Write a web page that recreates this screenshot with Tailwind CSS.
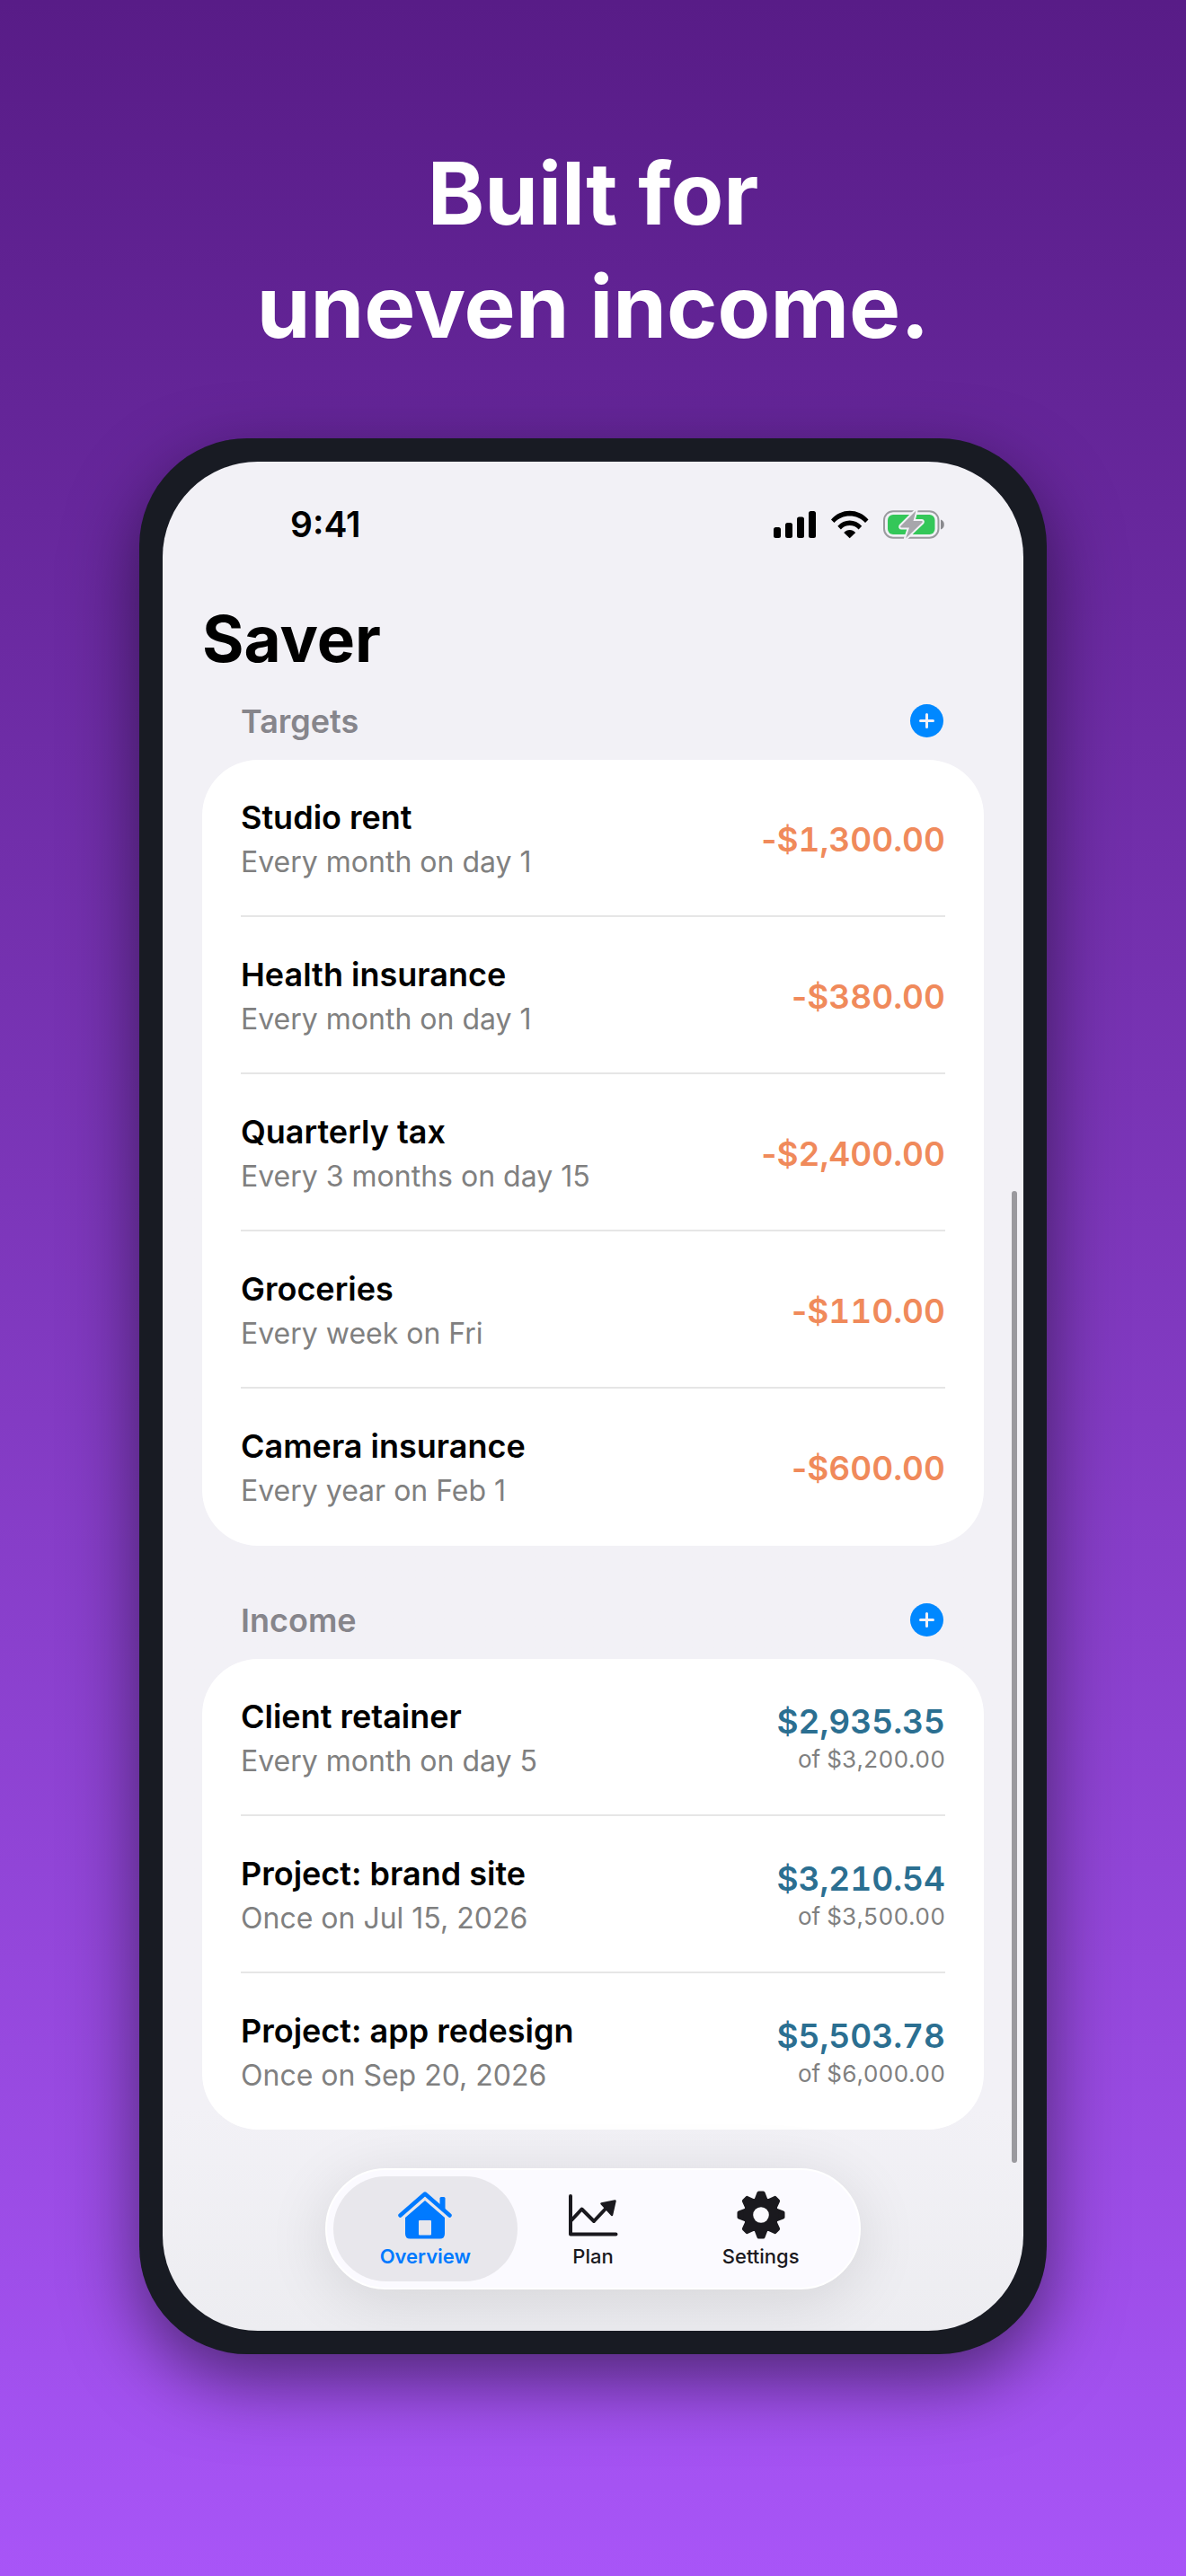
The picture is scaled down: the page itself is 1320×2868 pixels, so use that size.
<!DOCTYPE html>
<html lang="en">
<head>
<meta charset="utf-8">
<meta name="viewport" content="width=device-width, initial-scale=1">
<title>Saver</title>
<script src="https://cdn.jsdelivr.net/npm/@tailwindcss/browser@4"></script>
</head>
<body class="min-h-screen bg-linear-to-b from-[#581c87] to-[#a855f7] font-['Inter',sans-serif] text-black antialiased">
<main class="flex flex-col items-center px-4 pt-[152px] pb-[247px]">
  <h2 class="text-center text-[96px] leading-[126px] font-bold text-white">Built for<br>uneven income.</h2>

  <div class="mt-[84px] w-full max-w-[1010px] rounded-[120px] bg-[#181b23] p-[26px] shadow-[0_30px_80px_rgba(0,0,0,0.5)]">
    <div class="relative overflow-hidden rounded-[106px] bg-linear-to-b from-[#f2f1f6] from-88% to-[#ededf1] px-[44px]">

      <!-- Status bar -->
      <div class="flex h-[140px] items-center justify-between pr-[44px] pl-[98px]">
        <span class="text-[39px] leading-[48px] font-semibold">9:41</span>
        <svg class="h-[32px] w-[190px]" viewBox="0 0 190 32" aria-label="Signal, Wi-Fi, battery charging" role="img">
          <rect x="0" y="19" width="8" height="12" rx="2.5"/>
          <rect x="13" y="14" width="8" height="17" rx="2.5"/>
          <rect x="26" y="7.500" width="8" height="23.500" rx="2.500"/>
          <rect x="39" y="1" width="8" height="30" rx="2.500"/>
          <path d="M64 10.500C69.500 4 77 .700 84.700 .700S100 4 105.500 10.500L102 14C97.500 9 91.500 6.400 84.700 6.400S72 9 67.500 14Z"/>
          <path d="M71.300 17.800C75 13.500 79.700 11.500 84.700 11.500S94.500 13.500 98.200 17.800L94.600 21.400C92 18.500 88.600 17 84.700 17S77.500 18.500 74.900 21.400Z"/>
          <path d="M78.200 24.900C80 22.900 82.200 21.900 84.700 21.900S89.400 22.900 91.200 24.900L84.700 31.300Z"/>
          <rect x="123" y="1.200" width="60.500" height="29.500" rx="10" fill="none" stroke="#9b9b9f" stroke-width="2"/>
          <rect x="127" y="5" width="52.500" height="22" rx="6" fill="#34c759"/>
          <path d="M186 10.500C189 11.500 189.800 13.500 189.800 16S189 20.500 186 21.500Z" fill="#8a8a8e"/>
          <path d="M158.500 0.500L141.500 17.500Q140.500 19.500 142.500 19.500H151L147 31.500L165.500 13.800Q166.500 12 164.500 12H155.500Z" fill="#a7a6ab" stroke="#f2f1f6" stroke-width="4" stroke-linejoin="round" paint-order="stroke"/>
        </svg>
      </div>

      <h1 class="mt-[17px] text-[71px] leading-[80px] font-bold">Saver</h1>

      <section class="mt-[8px]">
        <div class="flex h-[87px] items-center justify-between pr-[45px] pl-[43px]">
          <h2 class="text-[36px] leading-[50px] font-semibold text-[#86858b]">Targets</h2>
          <button type="button" aria-label="Add target" class="size-[37px] rounded-full bg-[#0088ff]">
            <svg class="size-[37px]" viewBox="0 0 37 37" fill="none" stroke="#f2f1f6" stroke-width="3" stroke-linecap="round"><path d="M18.500 11.500V25.500M11.500 18.500H25.500"/></svg>
          </button>
        </div>
        <ul class="rounded-[62px] bg-white px-[43px]">
          <li class="flex items-center justify-between border-b-2 border-[#e6e6e6] pt-[39px] pb-[34px]">
            <div><h3 class="text-[36px] leading-[50px] font-semibold">Studio rent</h3><p class="text-[32px] leading-[50px] text-[#808080]">Every month on day 1</p></div>
            <p class="text-[37px] leading-[42px] font-semibold text-[#f08a5b]">-<span class="tabular-nums">$1,300.00</span></p>
          </li>
          <li class="flex items-center justify-between border-b-2 border-[#e6e6e6] pt-[39px] pb-[34px]">
            <div><h3 class="text-[36px] leading-[50px] font-semibold">Health insurance</h3><p class="text-[32px] leading-[50px] text-[#808080]">Every month on day 1</p></div>
            <p class="text-[37px] leading-[42px] font-semibold text-[#f08a5b]">-<span class="tabular-nums">$380.00</span></p>
          </li>
          <li class="flex items-center justify-between border-b-2 border-[#e6e6e6] pt-[39px] pb-[34px]">
            <div><h3 class="text-[36px] leading-[50px] font-semibold">Quarterly tax</h3><p class="text-[32px] leading-[50px] text-[#808080]">Every 3 months on day 15</p></div>
            <p class="text-[37px] leading-[42px] font-semibold text-[#f08a5b]">-<span class="tabular-nums">$2,400.00</span></p>
          </li>
          <li class="flex items-center justify-between border-b-2 border-[#e6e6e6] pt-[39px] pb-[34px]">
            <div><h3 class="text-[36px] leading-[50px] font-semibold">Groceries</h3><p class="text-[32px] leading-[50px] text-[#808080]">Every week on Fri</p></div>
            <p class="text-[37px] leading-[42px] font-semibold text-[#f08a5b]">-<span class="tabular-nums">$110.00</span></p>
          </li>
          <li class="flex items-center justify-between pt-[39px] pb-[36px]">
            <div><h3 class="text-[36px] leading-[50px] font-semibold">Camera insurance</h3><p class="text-[32px] leading-[50px] text-[#808080]">Every year on Feb 1</p></div>
            <p class="text-[37px] leading-[42px] font-semibold text-[#f08a5b]">-<span class="tabular-nums">$600.00</span></p>
          </li>
        </ul>
      </section>

      <section class="mt-[39px]">
        <div class="flex h-[87px] items-center justify-between pr-[45px] pl-[43px]">
          <h2 class="text-[36px] leading-[50px] font-semibold text-[#86858b]">Income</h2>
          <button type="button" aria-label="Add income" class="size-[37px] rounded-full bg-[#0088ff]">
            <svg class="size-[37px]" viewBox="0 0 37 37" fill="none" stroke="#f2f1f6" stroke-width="3" stroke-linecap="round"><path d="M18.500 11.500V25.500M11.500 18.500H25.500"/></svg>
          </button>
        </div>
        <ul class="rounded-[62px] bg-white px-[43px]">
          <li class="flex items-center justify-between border-b-2 border-[#e6e6e6] pt-[39px] pb-[34px]">
            <div><h3 class="text-[36px] leading-[50px] font-semibold">Client retainer</h3><p class="text-[32px] leading-[50px] text-[#808080]">Every month on day 5</p></div>
            <div class="pt-1 text-right tabular-nums"><p class="text-[37px] leading-[42px] font-semibold text-[#2b6f91]">$2,935.35</p><p class="text-[26px] leading-[42px] text-[#808080]">of $3,200.00</p></div>
          </li>
          <li class="flex items-center justify-between border-b-2 border-[#e6e6e6] pt-[39px] pb-[34px]">
            <div><h3 class="text-[36px] leading-[50px] font-semibold">Project: brand site</h3><p class="text-[32px] leading-[50px] text-[#808080]">Once on Jul 15, 2026</p></div>
            <div class="pt-1 text-right tabular-nums"><p class="text-[37px] leading-[42px] font-semibold text-[#2b6f91]">$3,210.54</p><p class="text-[26px] leading-[42px] text-[#808080]">of $3,500.00</p></div>
          </li>
          <li class="flex items-center justify-between pt-[39px] pb-[35px]">
            <div><h3 class="text-[36px] leading-[50px] font-semibold">Project: app redesign</h3><p class="text-[32px] leading-[50px] text-[#808080]">Once on Sep 20, 2026</p></div>
            <div class="pt-1 text-right tabular-nums"><p class="text-[37px] leading-[42px] font-semibold text-[#2b6f91]">$5,503.78</p><p class="text-[26px] leading-[42px] text-[#808080]">of $6,000.00</p></div>
          </li>
        </ul>
      </section>

      <!-- Floating tab bar -->
      <nav class="mx-auto mt-[43px] mb-[46px] grid max-w-[596px] grid-cols-3 rounded-full border-2 border-white bg-[#fbfaff] px-[16px] py-[7px] shadow-[0_12px_70px_rgba(0,0,0,0.11)]">
        <a href="#overview" aria-current="page" class="relative flex h-[117px] flex-col items-center gap-1 pt-[15px] text-[22px] leading-[28px] font-semibold text-[#007aff]">
          <span class="absolute inset-y-0 -right-[9px] -left-[9px] rounded-full bg-[#e8e7ec]"></span>
          <svg class="relative h-[56px] w-[60px]" viewBox="0 0 60 56" fill="#007aff">
            <path d="M2.500 28.500L30 4.500L57.500 28.500" fill="none" stroke="#007aff" stroke-width="4.500" stroke-linecap="round" stroke-linejoin="round"/>
            <path d="M46.500 9.500Q46.500 8 48 8H51Q52.500 8 52.500 9.500V23L46.500 17.500Z"/>
            <path fill-rule="evenodd" d="M30 12L52 31V49Q52 54.500 46.500 54.500H13.500Q8 54.500 8 49V31ZM24 34Q23 34 23 35V49.500Q23 50.500 24 50.500H36Q37 50.500 37 49.500V35Q37 34 36 34Z"/>
          </svg>
          <span class="relative">Overview</span>
        </a>
        <a href="#plan" class="flex h-[117px] flex-col items-center gap-1 pt-[15px] text-[22px] leading-[28px] font-medium text-[#1a191e]">
          <svg class="h-[56px] w-[60px]" viewBox="0 0 60 56" fill="none" stroke="#1a191e" stroke-width="4" stroke-linecap="round" stroke-linejoin="round">
            <path d="M5 7V49.500H55.500"/><path d="M6 34L17.500 21.500L31 35L46 19"/><path d="M39.500 15.500L54.500 12.500L51 28Z" fill="#1a191e" stroke-width="2.500"/>
          </svg>
          <span>Plan</span>
        </a>
        <a href="#settings" class="flex h-[117px] flex-col items-center gap-1 pt-[15px] text-[22px] leading-[28px] font-medium text-[#1a191e]">
          <svg class="h-[56px] w-[60px]" viewBox="0 0 60 56">
            <g transform="translate(30 28)" fill="#1a191e">
              <path id="tooth" d="M-7.500 -17L-4.500 -25Q-4 -26.500 -2.500 -26.500H2.500Q4 -26.500 4.500 -25L7.500 -17V17L4.500 25Q4 26.500 2.500 26.500H-2.500Q-4 26.500 -4.500 25L-7.500 17Z"/>
              <use href="#tooth" transform="rotate(45)"/><use href="#tooth" transform="rotate(90)"/><use href="#tooth" transform="rotate(135)"/>
              <circle r="19.500"/><circle r="8.800" fill="#fbfaff"/>
            </g>
          </svg>
          <span>Settings</span>
        </a>
      </nav>

      <!-- Scroll indicator -->
      <div class="absolute top-[39%] right-[7px] bottom-[9%] w-[6px] rounded-full bg-[#9a999e]"></div>
    </div>
  </div>
</main>
</body>
</html>
